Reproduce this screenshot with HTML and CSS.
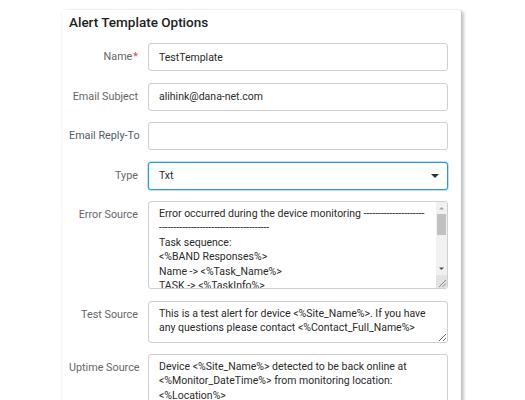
FILE: index.html
```html
<!DOCTYPE html>
<html>
<head>
<meta charset="utf-8">
<link rel="stylesheet" href="styles.css">
</head>
<body>
<div class="card">
  <h2 class="title">Alert Template Options</h2>
  <div class="form">
    <label class="lbl">Name<span class="req">*</span></label>
    <input class="field" type="text" value="TestTemplate">

    <label class="lbl">Email Subject</label>
    <input class="field" type="text" value="alihink@dana-net.com">

    <label class="lbl lbl-alt">Email Reply-To</label>
    <input class="field" type="text" value="">

    <label class="lbl">Type</label>
    <div class="field select">
      <span>Txt</span>
      <span class="caret"></span>
    </div>

    <label class="lbl">Error Source</label>
    <div class="field area-box">
      <textarea class="area-inner">Error occurred during the device monitoring ---------------------
--------------------------------------
Task sequence:
&lt;%BAND Responses%&gt;
Name -&gt; &lt;%Task_Name%&gt;
TASK -&gt; &lt;%TaskInfo%&gt;
Result -&gt; &lt;%Task_Result%&gt;
&lt;%END%&gt;</textarea>
      <div class="sbar">
        <div class="sbtn">
          <svg width="11" height="12" viewBox="0 0 11 12"><path d="M3 7.5 L5.5 5 L8 7.5 Z" fill="#a3a3a3"/></svg>
        </div>
        <div class="strack"><div class="sthumb"></div></div>
        <div class="sbtn">
          <svg width="11" height="12" viewBox="0 0 11 12"><path d="M3 4.5 L5.5 7 L8 4.5 Z" fill="#4a4a4a"/></svg>
        </div>
        <div class="scorner">
          <svg width="11" height="13" viewBox="0 0 11 13"><path d="M3 12 L10 5 M6.5 12 L10 8.5" stroke="#8a8a8a" stroke-width="1"/></svg>
        </div>
      </div>
    </div>

    <label class="lbl">Test Source</label>
    <textarea class="field area area-test">This is a test alert for device &lt;%Site_Name%&gt;. If you have any questions please contact &lt;%Contact_Full_Name%&gt;</textarea>

    <label class="lbl">Uptime Source</label>
    <textarea class="field area area-uptime">Device &lt;%Site_Name%&gt; detected to be back online at &lt;%Monitor_DateTime%&gt; from monitoring location: &lt;%Location%&gt;</textarea>
  </div>
</div>
</body>
</html>
```
FILE: styles.css
```css
html, body {
  margin: 0;
  padding: 0;
  background: #ffffff;
}

body {
  font-family: Roboto, "Liberation Sans", sans-serif;
  overflow: hidden;
  height: 400px;
}

.card {
  margin: 10px 0 0 62px;
  width: 399px;
  height: 420px;
  box-sizing: border-box;
  padding: 2px 7px 0 7px;
  background: #fff;
  border-radius: 3px;
  box-shadow: 0 0 2px rgba(0, 0, 0, 0.12), 3px 1px 3px rgba(0, 0, 0, 0.22);
}

.title {
  margin: 0;
  font-size: 13.5px;
  font-weight: 500;
  line-height: 20px;
  color: #222;
}

.form {
  margin-top: 11px;
  display: grid;
  grid-template-columns: 69px 300px;
  column-gap: 10px;
  row-gap: 11.5px;
}

.lbl {
  align-self: start;
  text-align: right;
  padding-top: 7px;
  font-size: 10.8px;
  line-height: 14px;
  color: #666;
  white-space: nowrap;
}

.lbl-alt {
  color: #4f5b68;
}

.req {
  color: #e0443a;
  margin-left: 1px;
}

.field {
  box-sizing: border-box;
  width: 300px;
  height: 28px;
  margin: 0;
  border: 1px solid #cfcfcf;
  border-radius: 3px;
  padding: 0 10px;
  font-family: Roboto, "Liberation Sans", sans-serif;
  font-size: 10.5px;
  color: #2b2b2b;
  background: #fff;
  outline: none;
}

.select {
  display: flex;
  align-items: center;
  justify-content: space-between;
  border-color: #2b9ad8;
  box-shadow: 0 0 0 0.5px #7cc2ea;
  padding-right: 8px;
}

.caret {
  width: 0;
  height: 0;
  border-left: 4px solid transparent;
  border-right: 4px solid transparent;
  border-top: 4px solid #333;
}

.area {
  display: block;
  padding: 5px 10px;
  line-height: 14.4px;
  resize: vertical;
  overflow: hidden;
}

.area-test {
  height: 42px;
}

.area-uptime {
  height: 60px;
}

.area-box {
  display: flex;
  height: 88px;
  padding: 0;
  overflow: hidden;
}

.area-inner {
  flex: 1;
  min-width: 0;
  margin: 0;
  border: none;
  outline: none;
  resize: none;
  overflow: hidden;
  padding: 5px 2px 5px 10px;
  font-family: Roboto, "Liberation Sans", sans-serif;
  font-size: 10.5px;
  line-height: 14.4px;
  color: #2b2b2b;
  background: transparent;
  white-space: pre-wrap;
}

.sbar {
  width: 11px;
  flex: none;
  display: flex;
  flex-direction: column;
  background: #f1f1f1;
}

.sbtn {
  height: 12px;
  flex: none;
  display: flex;
}

.strack {
  flex: 1;
  display: flex;
  flex-direction: column;
}

.sthumb {
  height: 21px;
  margin: 0 1px;
  background: #c1c1c1;
}

.scorner {
  height: 13px;
  flex: none;
  display: flex;
  background: #e2e2e2;
}
```
